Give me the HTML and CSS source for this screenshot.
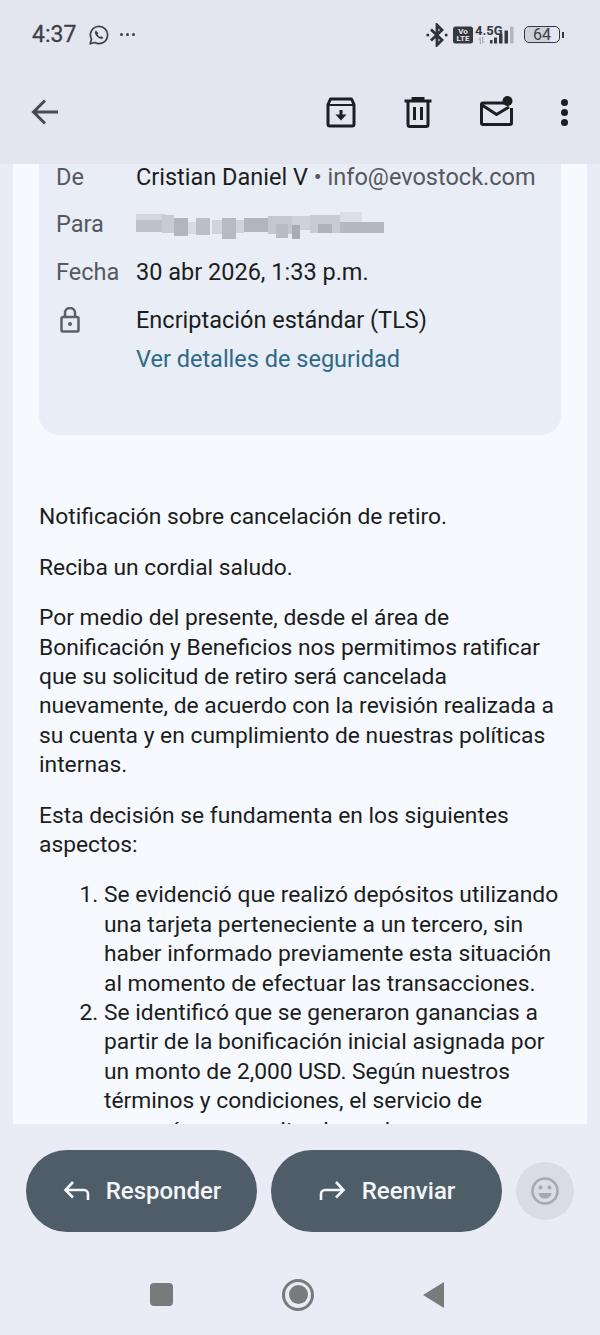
FILE: index.html
```html
<!DOCTYPE html>
<html lang="es">
<head>
    <meta charset="UTF-8">
    <meta name="viewport" content="width=device-width, initial-scale=1.0">
    <title>Correo</title>
    <link rel="stylesheet" href="styles.css">
</head>
<body>
    <div class="top-bar">
        <div class="status-bar">
            <div class="status-left">
                <span class="clock">4:37</span>
                <svg class="wa-icon" width="20" height="20" viewBox="0 0 20 20" fill="none" stroke="#3c3f47">
                    <path d="M1.2 18.8l1.3-4.6A8.6 8.6 0 1 1 5.8 17.5z" stroke-width="1.7" stroke-linejoin="round"/>
                    <path d="M7 5.6c-1 .6-1.3 1.7-.9 2.9.8 2.4 2.9 4.600 5.400 5.300 1.200.3 2.300-.1 2.800-1.100l-2-1.500-1 .9c-1.200-.5-2.300-1.600-2.800-2.800l.9-1z" fill="#3c3f47" stroke="none"/>
                </svg>
                <span class="more-dots"><i></i><i></i><i></i></span>
            </div>
            <div class="status-right">
                <svg width="22" height="24" viewBox="0 0 22 24" fill="none" stroke="#2f3238" stroke-width="2.800">
                    <path d="M5 6.500l11 10.500-5 5V2l5 5-11 10.500"/>
                    <circle cx="1.800" cy="12" r="1.500" fill="#2f3238" stroke="none"/>
                    <circle cx="20.200" cy="12" r="1.500" fill="#2f3238" stroke="none"/>
                </svg>
                <svg class="net-icon" width="64" height="20" viewBox="0 0 64 20">
                    <rect x="0" y="1.500" width="20" height="17" rx="2.500" fill="#35383f"/>
                    <text class="volte" x="10" y="8.800">Vo</text>
                    <text class="volte" x="10" y="16.300">LTE</text>
                    <text class="net-type" x="22" y="9.500">4.5G</text>
                    <path d="M27.500 12l-2 2.600h1.300V19h1.400zM29.500 19l2-2.600h-1.300V12h-1.400z" fill="#a3a6ad"/>
                    <rect x="37" y="15" width="2.500" height="3.500" fill="#35383f"/>
                    <rect x="41" y="12.500" width="3" height="6" rx=".5" fill="#35383f"/>
                    <rect x="46" y="9" width="3.500" height="9.500" rx=".5" fill="#35383f"/>
                    <rect x="51.500" y="5.500" width="3.500" height="13" rx=".5" fill="#35383f"/>
                    <rect x="57" y="1.500" width="3.500" height="17" rx=".5" fill="#b3b6bc"/>
                </svg>
                <div class="battery">
                    <div class="battery-body"><span class="battery-level">64</span></div>
                    <div class="battery-tip"></div>
                </div>
            </div>
        </div>
        <div class="toolbar">
            <svg width="30" height="30" viewBox="0 0 30 30" fill="none" stroke="#474a52" stroke-width="3">
                <path d="M28 15H4M15 3.500L3.500 15 15 26.500"/>
            </svg>
            <div class="toolbar-actions">
                <svg class="action-archive" width="32" height="32" viewBox="0 0 32 32" fill="none" stroke="#1c1e22" stroke-width="3" stroke-linejoin="round">
                    <path d="M3 8.500V28a2 2 0 0 0 2 2h22a2 2 0 0 0 2-2V8.500L26.500 3h-21z"/>
                    <path d="M3 9h26" stroke-width="2"/>
                    <path d="M16 14v7" />
                    <path d="M10.500 18.500H21.500L16 24.500z" fill="#1c1e22" stroke="none"/>
                </svg>
                <svg class="action-trash" width="28" height="32" viewBox="0 0 28 32" fill="none" stroke="#1c1e22" stroke-width="3">
                    <path d="M0.500 5h27M9 5V2.500h10V5" />
                    <path d="M4 5v23.500a2 2 0 0 0 2 2h16a2 2 0 0 0 2-2V5" />
                    <path d="M10.500 11v13M17.500 11v13"/>
                </svg>
                <svg class="action-mail" width="36" height="32" viewBox="0 0 36 32" fill="none" stroke="#1c1e22" stroke-width="3" stroke-linejoin="round">
                    <path d="M25 7H4a1.500 1.500 0 0 0-1.500 1.500V27A1.500 1.500 0 0 0 4 28.500h27a1.500 1.500 0 0 0 1.500-1.500V12"/>
                    <path d="M3 9l14.500 9.500L30 11"/>
                    <circle cx="28.500" cy="5" r="5" fill="#1c1e22" stroke="none"/>
                </svg>
                <div class="overflow-menu"><i></i><i></i><i></i></div>
            </div>
        </div>
    </div>

    <main class="mail-panel">
        <section class="details-card">
            <div class="detail-row detail-row-first">
                <span class="detail-label">De</span>
                <span class="detail-value">Cristian Daniel V <span class="detail-sender">• info@evostock.com</span></span>
            </div>
            <div class="detail-row">
                <span class="detail-label">Para</span>
                <svg class="redacted" width="248" height="29" viewBox="0 0 248 29">
                    <g class="mosaic">
                        <rect x="0" y="4" width="30" height="8" fill="#d4d6dd"/>
                        <rect x="0" y="10" width="30" height="12" fill="#bfc1c8"/>
                        <rect x="26" y="5" width="12" height="18" fill="#c9cbd2"/>
                        <rect x="38" y="8" width="14" height="18" fill="#b3b5bc"/>
                        <rect x="52" y="12" width="8" height="12" fill="#d8dae1"/>
                        <rect x="60" y="8" width="14" height="17" fill="#bcbec5"/>
                        <rect x="76" y="10" width="10" height="14" fill="#d2d4db"/>
                        <rect x="86" y="8" width="14" height="21" fill="#b8bac1"/>
                        <rect x="100" y="10" width="8" height="13" fill="#d0d2d9"/>
                        <rect x="108" y="8" width="24" height="14" fill="#b3b5bc"/>
                        <rect x="132" y="6" width="24" height="18" fill="#c5c7ce"/>
                        <rect x="140" y="14" width="12" height="14" fill="#b9bbc2"/>
                        <rect x="156" y="6" width="18" height="14" fill="#cfd1d8"/>
                        <rect x="156" y="15" width="8" height="14" fill="#a9abb2"/>
                        <rect x="174" y="5" width="30" height="18" fill="#c9cbd2"/>
                        <rect x="182" y="14" width="14" height="9" fill="#b0b2b9"/>
                        <rect x="204" y="2" width="22" height="14" fill="#dcdee5"/>
                        <rect x="204" y="12" width="44" height="11" fill="#b6b8bf"/>
                    </g>
                </svg>
            </div>
            <div class="detail-row">
                <span class="detail-label">Fecha</span>
                <span class="detail-value">30 abr 2026, 1:33 p.m.</span>
            </div>
            <div class="detail-row">
                <svg class="lock-icon" width="20" height="26" viewBox="0 0 20 26" fill="none" stroke="#5c6068" stroke-width="2.500">
                    <rect x="1.500" y="10" width="17" height="14.500" rx="1.500"/>
                    <path d="M5 10V6a5 5 0 0 1 10 0v4"/>
                    <circle cx="10" cy="17" r="2" fill="#5c6068" stroke="none"/>
                </svg>
                <div class="security-info">
                    <span class="detail-value">Encriptación estándar (TLS)</span>
                    <a class="security-link">Ver detalles de seguridad</a>
                </div>
            </div>
        </section>

        <article class="mail-body">
            <p>Notificación sobre cancelación de retiro.</p>
            <p>Reciba un cordial saludo.</p>
            <p>Por medio del presente, desde el área de Bonificación y Beneficios nos permitimos ratificar que su solicitud de retiro será cancelada nuevamente, de acuerdo con la revisión realizada a su cuenta y en cumplimiento de nuestras políticas internas.</p>
            <p>Esta decisión se fundamenta en los siguientes aspectos:</p>
            <ol>
                <li>Se evidenció que realizó depósitos utilizando una tarjeta perteneciente a un tercero, sin haber informado previamente esta situación al momento de efectuar las transacciones.</li>
                <li>Se identificó que se generaron ganancias a partir de la bonificación inicial asignada por un monto de 2,000 USD. Según nuestros términos y condiciones, el servicio de asesoría no permite el uso de</li>
            </ol>
        </article>
    </main>

    <div class="reply-bar">
        <button class="reply-btn">
            <svg width="28" height="24" viewBox="0 0 28 24" fill="none" stroke="#f4f6f9" stroke-width="2.600">
                <path d="M26 21v-6a4 4 0 0 0-4-4H4M11 3L3.500 11l7.500 7.500"/>
            </svg>
            Responder
        </button>
        <button class="reply-btn">
            <svg width="28" height="24" viewBox="0 0 28 24" fill="none" stroke="#f4f6f9" stroke-width="2.600">
                <path d="M3 21v-6a4 4 0 0 1 4-4h18M18 3l7.500 8-7.500 7.500"/>
            </svg>
            Reenviar
        </button>
        <div class="emoji-btn">
            <svg width="30" height="30" viewBox="0 0 30 30" fill="none" stroke="#a6a9af" stroke-width="2.600">
                <circle cx="15" cy="15" r="12.500"/>
                <circle cx="10.500" cy="11.500" r="2" fill="#a6a9af" stroke="none"/>
                <circle cx="19.500" cy="11.500" r="2" fill="#a6a9af" stroke="none"/>
                <path d="M8.500 17h13a6.500 5.500 0 0 1-13 0z" fill="#a6a9af" stroke="none"/>
            </svg>
        </div>
    </div>

    <nav class="nav-bar">
        <div class="nav-square"></div>
        <div class="nav-circle"><div class="nav-circle-inner"></div></div>
        <div class="nav-back"></div>
    </nav>
</body>
</html>
```
FILE: styles.css
```css
html, body {
    margin: 0;
    padding: 0;
    width: 600px;
    height: 1335px;
    overflow: hidden;
}
body {
    display: flex;
    flex-direction: column;
    background: #e9ecf4;
    font-family: Roboto, "Noto Sans", sans-serif;
    font-size: 22.8px;
    line-height: 29.4px;
    color: #1c1d20;
}
.top-bar {
    height: 164px;
    flex: none;
    background: #e3e6ee;
}
.status-bar {
    height: 68px;
    box-sizing: border-box;
    padding: 1px 36px 0 32px;
    display: flex;
    justify-content: space-between;
    align-items: center;
}
.status-left {
    display: flex;
    align-items: center;
}
.clock {
    font-size: 23px;
    color: #3c3f47;
    width: 57px;
    -webkit-text-stroke: 0.3px #3c3f47;
}
.more-dots {
    display: flex;
    gap: 3px;
    margin-left: 11px;
}
.more-dots i {
    width: 3px;
    height: 3px;
    border-radius: 50%;
    background: #3c3f47;
}
.status-right {
    display: flex;
    align-items: center;
}
.net-icon {
    margin-left: 5px;
    overflow: visible;
}
.volte {
    font-size: 8px;
    font-weight: 700;
    fill: #e3e6ee;
    text-anchor: middle;
}
.net-type {
    font-size: 13px;
    font-weight: 700;
    fill: #35383f;
}
.battery {
    display: flex;
    align-items: center;
    margin-left: 7px;
}
.battery-body {
    width: 34px;
    height: 15px;
    border: 1.500px solid #35383f;
    border-radius: 5px;
    background: linear-gradient(to right, #ced1d8 75%, transparent 75%);
    display: flex;
    align-items: center;
    justify-content: center;
}
.battery-level {
    font-size: 16px;
    line-height: 15px;
    color: #3c3f47;
}
.battery-tip {
    width: 2px;
    height: 6px;
    margin-left: 2px;
    background: #35383f;
}
.toolbar {
    height: 88px;
    padding: 0 32px 0 30px;
    display: flex;
    justify-content: space-between;
    align-items: center;
}
.toolbar-actions {
    display: flex;
    align-items: center;
}
.action-archive {
    margin-right: 47px;
}
.action-trash {
    margin-right: 47px;
}
.action-mail {
    margin-right: 46px;
}
.overflow-menu {
    display: flex;
    flex-direction: column;
    gap: 3px;
}
.overflow-menu i {
    width: 7px;
    height: 7px;
    border-radius: 50%;
    background: #1c1e22;
}
.mail-panel {
    flex: none;
    height: 960px;
    margin: 0 13px;
    padding: 0 26px;
    background: #f6f9fe;
    overflow: hidden;
}
/* top of the card is scrolled away under the toolbar */
.details-card {
    padding: 0 17px 61px;
    background: #e9edf5;
    border-radius: 0 0 20px 20px;
    display: flex;
    flex-direction: column;
    gap: 18.3px;
    font-size: 23.5px;
}
.detail-row {
    display: flex;
    align-items: flex-start;
}
.detail-row-first {
    line-height: 26px;
    padding-bottom: 2px;
}
.detail-label {
    width: 80px;
    flex: none;
    color: #55585f;
}
.detail-value {
    color: #1c1d20;
}
.detail-sender {
    color: #55585f;
}
.redacted {
    flex: none;
}
.mosaic {
    filter: blur(0.7px);
}
.lock-icon {
    flex: none;
    margin: 1px 56px 0 4px;
}
.security-info {
    display: flex;
    flex-direction: column;
    gap: 9.5px;
}
.security-link {
    color: #2d6a88;
}
.mail-body {
    margin-top: 67.3px;
}
.mail-body p {
    margin: 0 0 21px;
}
.mail-body ol {
    margin: 0;
    padding-left: 65px;
}
.reply-bar {
    height: 82px;
    flex: none;
    margin-top: 26px;
    padding: 0 26px;
    display: flex;
    align-items: center;
    gap: 14px;
}
.reply-btn {
    width: 231px;
    height: 82px;
    border: none;
    border-radius: 41px;
    background: #4f5d69;
    color: #f4f6f9;
    font-family: Roboto, "Noto Sans", sans-serif;
    font-size: 24px;
    font-weight: 500;
    display: flex;
    align-items: center;
    justify-content: center;
    gap: 16px;
}
.emoji-btn {
    width: 58px;
    height: 58px;
    border-radius: 50%;
    background: #d9dce3;
    display: flex;
    align-items: center;
    justify-content: center;
}
.nav-bar {
    flex: 1;
    padding: 22px 6px 0 0;
    display: flex;
    align-items: center;
    justify-content: center;
    gap: 109px;
}
.nav-square {
    width: 23px;
    height: 23px;
    border-radius: 4px;
    background: #797a7c;
}
.nav-circle {
    width: 32px;
    height: 32px;
    box-sizing: border-box;
    border-radius: 50%;
    border: 3px solid #797a7c;
    display: flex;
    align-items: center;
    justify-content: center;
}
.nav-circle-inner {
    width: 19px;
    height: 19px;
    border-radius: 50%;
    background: #797a7c;
}
.nav-back {
    width: 0;
    height: 0;
    border-top: 13px solid transparent;
    border-bottom: 13px solid transparent;
    border-right: 21px solid #797a7c;
}
```
